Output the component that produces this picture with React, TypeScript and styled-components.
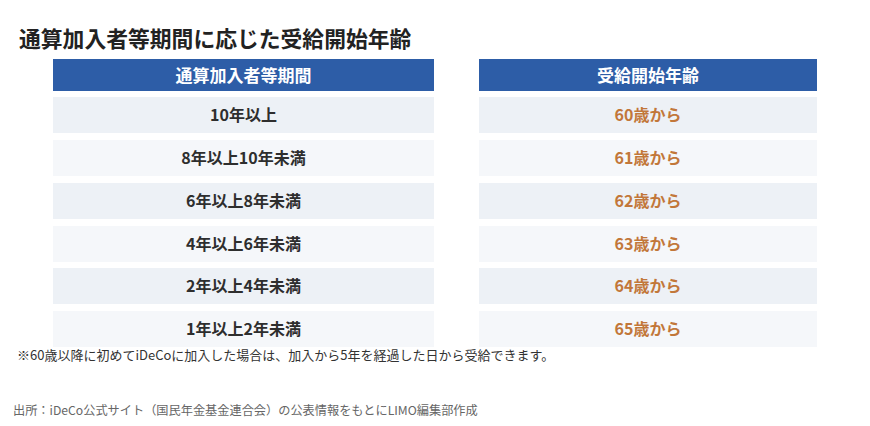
import React from "react";
import styled, { createGlobalStyle } from "styled-components";

const GlobalStyle = createGlobalStyle`
  html, body {
    margin: 0;
    padding: 0;
    background: #fff;
  }
  body {
    font-family: "Noto Sans CJK JP", "Noto Sans", sans-serif;
    color: #2b2b2b;
  }
`;

const Page = styled.div`
  width: 870px;
  height: 426px;
  overflow: hidden;
  background: #fff;
`;

const Title = styled.h1`
  margin: 0;
  padding: 23px 0 0 19px;
  font-size: 21.8px;
  line-height: 30px;
  font-weight: 700;
  color: #222;
`;

const Table = styled.div`
  display: grid;
  grid-template-columns: 381px 338px;
  column-gap: 45px;
  margin: 5.5px 0 0 53px;
`;

const Column = styled.div`
  display: grid;
  grid-auto-rows: 36px;
  grid-template-rows: 32px;
  row-gap: 6.8px;
`;

const HeaderCell = styled.div`
  display: flex;
  align-items: center;
  justify-content: center;
  background: #2d5da7;
  color: #fff;
  font-size: 17px;
  font-weight: 700;
`;

type CellProps = {
  $alt: boolean;
  $accent?: boolean;
};

const Cell = styled.div<CellProps>`
  display: flex;
  align-items: center;
  justify-content: center;
  padding-bottom: 2px;
  background: ${(p) => (p.$alt ? "#f5f7fa" : "#edf1f6")};
  color: ${(p) => (p.$accent ? "#c2773a" : "#2e2e2e")};
  font-size: 16px;
  font-weight: 700;
`;

const Note = styled.p`
  margin: 0;
  padding-left: 17px;
  font-size: 13px;
  line-height: 16px;
  color: #333;
`;

const Source = styled.p`
  margin: 39px 0 0;
  padding-left: 13px;
  font-size: 12.2px;
  line-height: 16px;
  color: #666;
`;

const periods = [
  "10年以上",
  "8年以上10年未満",
  "6年以上8年未満",
  "4年以上6年未満",
  "2年以上4年未満",
  "1年以上2年未満",
];

const ages = ["60歳から", "61歳から", "62歳から", "63歳から", "64歳から", "65歳から"];

const App: React.FC = () => {
  return (
    <Page>
      <GlobalStyle />
      <Title>通算加入者等期間に応じた受給開始年齢</Title>
      <Table>
        <Column>
          <HeaderCell>通算加入者等期間</HeaderCell>
          {periods.map((p, i) => (
            <Cell key={p} $alt={i % 2 === 1}>
              {p}
            </Cell>
          ))}
        </Column>
        <Column>
          <HeaderCell>受給開始年齢</HeaderCell>
          {ages.map((a, i) => (
            <Cell key={a} $alt={i % 2 === 1} $accent>
              {a}
            </Cell>
          ))}
        </Column>
      </Table>
      <Note>※60歳以降に初めてiDeCoに加入した場合は、加入から5年を経過した日から受給できます。</Note>
      <Source>出所：iDeCo公式サイト（国民年金基金連合会）の公表情報をもとにLIMO編集部作成</Source>
    </Page>
  );
};

export default App;
